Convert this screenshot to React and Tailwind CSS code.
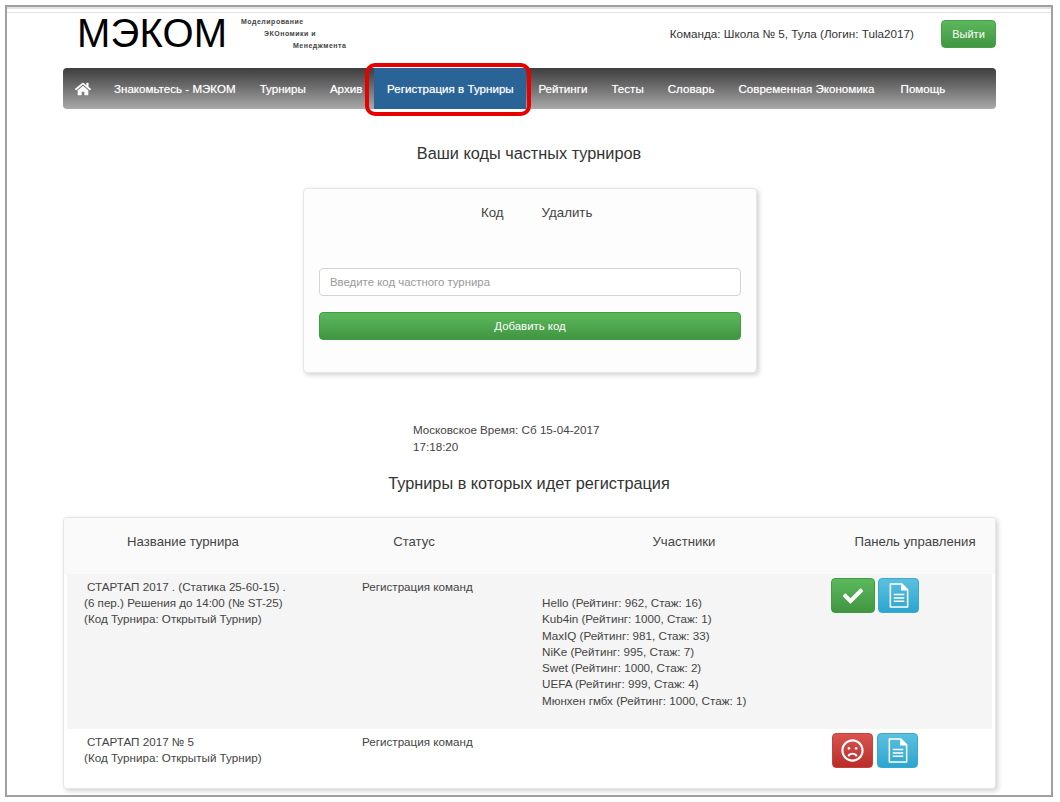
import React from "react";
import { FaHome, FaCheck, FaRegFrown } from "react-icons/fa";

const navItems = [
  ["Знакомьтесь - МЭКОМ", "ml-[23px]"],
  ["Турниры", "ml-[24px]"],
  ["Архив", "ml-[24px]"],
];
const navAfter = [
  ["Рейтинги", "ml-[12px]"],
  ["Тесты", "ml-[24px]"],
  ["Словарь", "ml-[24px]"],
  ["Современная Экономика", "ml-[24px]"],
  ["Помощь", "ml-[26px]"],
];
const members = [
  "Hello (Рейтинг: 962, Стаж: 16)",
  "Kub4in (Рейтинг: 1000, Стаж: 1)",
  "MaxIQ (Рейтинг: 981, Стаж: 33)",
  "NiKe (Рейтинг: 995, Стаж: 7)",
  "Swet (Рейтинг: 1000, Стаж: 2)",
  "UEFA (Рейтинг: 999, Стаж: 4)",
  "Мюнхен гмбх (Рейтинг: 1000, Стаж: 1)",
];

function DocIcon() {
  return (
    <svg width="20" height="25" viewBox="0 0 20 26" fill="none" stroke="white" strokeWidth="1.6">
      <path d="M1 1h12l6 6v18H1z" strokeLinejoin="round" />
      <path d="M13 1v6h6" fill="white" />
      <path d="M4.5 12h11M4.5 15.5h11M4.5 19h11" strokeWidth="1.5" />
    </svg>
  );
}

function DocButton() {
  return (
    <button className="w-[41px] h-[35px] rounded-[4px] border border-[#3aa8cf] bg-gradient-to-b from-[#5bc0de] to-[#2aa5d0] flex items-center justify-center text-white">
      <DocIcon />
    </button>
  );
}

export default function App() {
  return (
    <div className="w-[1060px] h-[802px] bg-white overflow-hidden pt-[5px] pl-[5px] font-['Liberation_Sans',Arial,sans-serif] text-[11.65px] leading-[16px] text-[#444]">
      <div className="relative w-[1048px] h-[792px] border-2 border-[#a0a0a0] bg-white">
        <div className="h-[6px] border-t-2 border-b border-[#e4e4e4]" />
        {/* header */}
        <div className="flex h-[47px] pl-[70px] pr-[55px] items-start">
          <div className="text-[40px] leading-[42px] text-black mt-[-1px] w-[164px] tracking-[0.2px]">МЭКОМ</div>
          <div className="text-[7px] leading-[12px] font-bold text-[#444] mt-[3px] tracking-[0.5px]">
            <div>Моделирование</div>
            <div className="pl-[23px]">ЭКОномики и</div>
            <div className="pl-[52px]">Менеджмента</div>
          </div>
          <div className="ml-auto mt-[13px] text-[11.7px] leading-[16px] text-[#333]">Команда: Школа № 5, Тула (Логин: Tula2017)</div>
          <button className="ml-[27px] mt-[7px] w-[55px] h-[28px] rounded-[4px] border border-[#48a048] bg-gradient-to-b from-[#5cb85c] to-[#419641] text-white text-[11px]">Выйти</button>
        </div>
        {/* nav */}
        <div className="ml-[56px] mt-[8px] w-[933px] h-[41px] rounded-[4px] bg-gradient-to-b from-[#3e3e3e] to-[#aaaaaa] flex items-center text-[11.6px] text-white [text-shadow:0_0_1px_rgba(255,255,255,0.6)]">
          <FaHome className="ml-[12px] text-[16px] shrink-0" />
          {navItems.map(([t, c]) => (
            <span key={t} className={c + " whitespace-nowrap"}>{t}</span>
          ))}
          <span className="ml-[12px] h-full w-[152px] bg-[#2a6496] flex items-center justify-center whitespace-nowrap">Регистрация в Турниры</span>
          {navAfter.map(([t, c]) => (
            <span key={t} className={c + " whitespace-nowrap"}>{t}</span>
          ))}
        </div>
        {/* red highlight */}
        <div className="absolute left-[358px] top-[56px] w-[166px] h-[53px] rounded-[10px] border-[4px] border-[#e60000]" />

        <h2 className="mt-[33px] h-[22px] text-center text-[16.3px] leading-[22px] text-[#333]">Ваши коды частных турниров</h2>

        {/* code card */}
        <div className="ml-[296px] mt-[24px] w-[454px] h-[185px] rounded-[4px] border border-[#e6e6e6] bg-[#fdfdfd] shadow-[2px_2px_5px_rgba(0,0,0,0.18)] px-[15px]">
          <div className="flex pt-[15px] pl-[162px] text-[13.3px] leading-[18px]">
            <span>Код</span>
            <span className="ml-[38px]">Удалить</span>
          </div>
          <input
            readOnly
            placeholder="Введите код частного турнира"
            className="block mt-[46px] w-[422px] h-[28px] rounded-[4px] border border-[#d4d4d4] bg-white px-[10px] text-[11.4px] placeholder:text-[#999] outline-none"
          />
          <button className="block mt-[16px] w-[422px] h-[28px] rounded-[4px] border border-[#429a42] bg-gradient-to-b from-[#5cb85c] to-[#419641] text-white text-[11.4px]">Добавить код</button>
        </div>

        <div className="ml-[406px] mt-[48px] leading-[17px]">
          <div>Московское Время: Сб 15-04-2017</div>
          <div>17:18:20</div>
        </div>

        <h2 className="mt-[17px] h-[22px] text-center text-[16.3px] leading-[22px] text-[#333]">Турниры в которых идет регистрация</h2>

        {/* tournaments card */}
        <div className="ml-[56px] mt-[23px] w-[933px] h-[272px] rounded-[4px] border border-[#e6e6e6] bg-white shadow-[2px_2px_5px_rgba(0,0,0,0.18)] overflow-hidden">
          <div className="h-[56px] bg-[#fafafa] grid grid-cols-[232px_230px_310px_152px] pl-[3px] pt-[15px] text-center text-[13.2px] leading-[18px] text-[#444]">
            <div>Название турнира</div>
            <div>Статус</div>
            <div>Участники</div>
            <div>Панель управления</div>
          </div>
          <div className="ml-[3px] w-[925px] h-[155px] bg-[#f5f5f5] grid grid-cols-[295px_180px_289px_161px]">
            <div className="pl-[17px] pt-[5px]">
              <div className="pl-[3px]">СТАРТАП 2017 . (Статика 25-60-15) .</div>
              <div>(6 пер.) Решения до 14:00 (№ ST-25)</div>
              <div>(Код Турнира: Открытый Турнир)</div>
            </div>
            <div className="pt-[5px]">Регистрация команд</div>
            <div className="pt-[21px] leading-[16.3px]">
              {members.map((m) => <div key={m}>{m}</div>)}
            </div>
            <div className="pt-[4px] flex items-start gap-[3px]">
              <button className="w-[44px] h-[35px] rounded-[4px] border border-[#429a42] bg-gradient-to-b from-[#5cb85c] to-[#419641] flex items-center justify-center text-white">
                <FaCheck className="text-[20px]" />
              </button>
              <DocButton />
            </div>
          </div>
          <div className="ml-[3px] w-[925px] grid grid-cols-[295px_180px_289px_161px]">
            <div className="pl-[17px] pt-[5px]">
              <div className="pl-[3px]">СТАРТАП 2017 № 5</div>
              <div>(Код Турнира: Открытый Турнир)</div>
            </div>
            <div className="pt-[5px]">Регистрация команд</div>
            <div />
            <div className="pt-[4px] pl-[1px] flex items-start gap-[4px]">
              <button className="w-[41px] h-[35px] rounded-[4px] border border-[#c9403c] bg-gradient-to-b from-[#d9534f] to-[#b92c28] flex items-center justify-center text-white">
                <FaRegFrown className="text-[23px]" />
              </button>
              <DocButton />
            </div>
          </div>
        </div>
      </div>
    </div>
  );
}
